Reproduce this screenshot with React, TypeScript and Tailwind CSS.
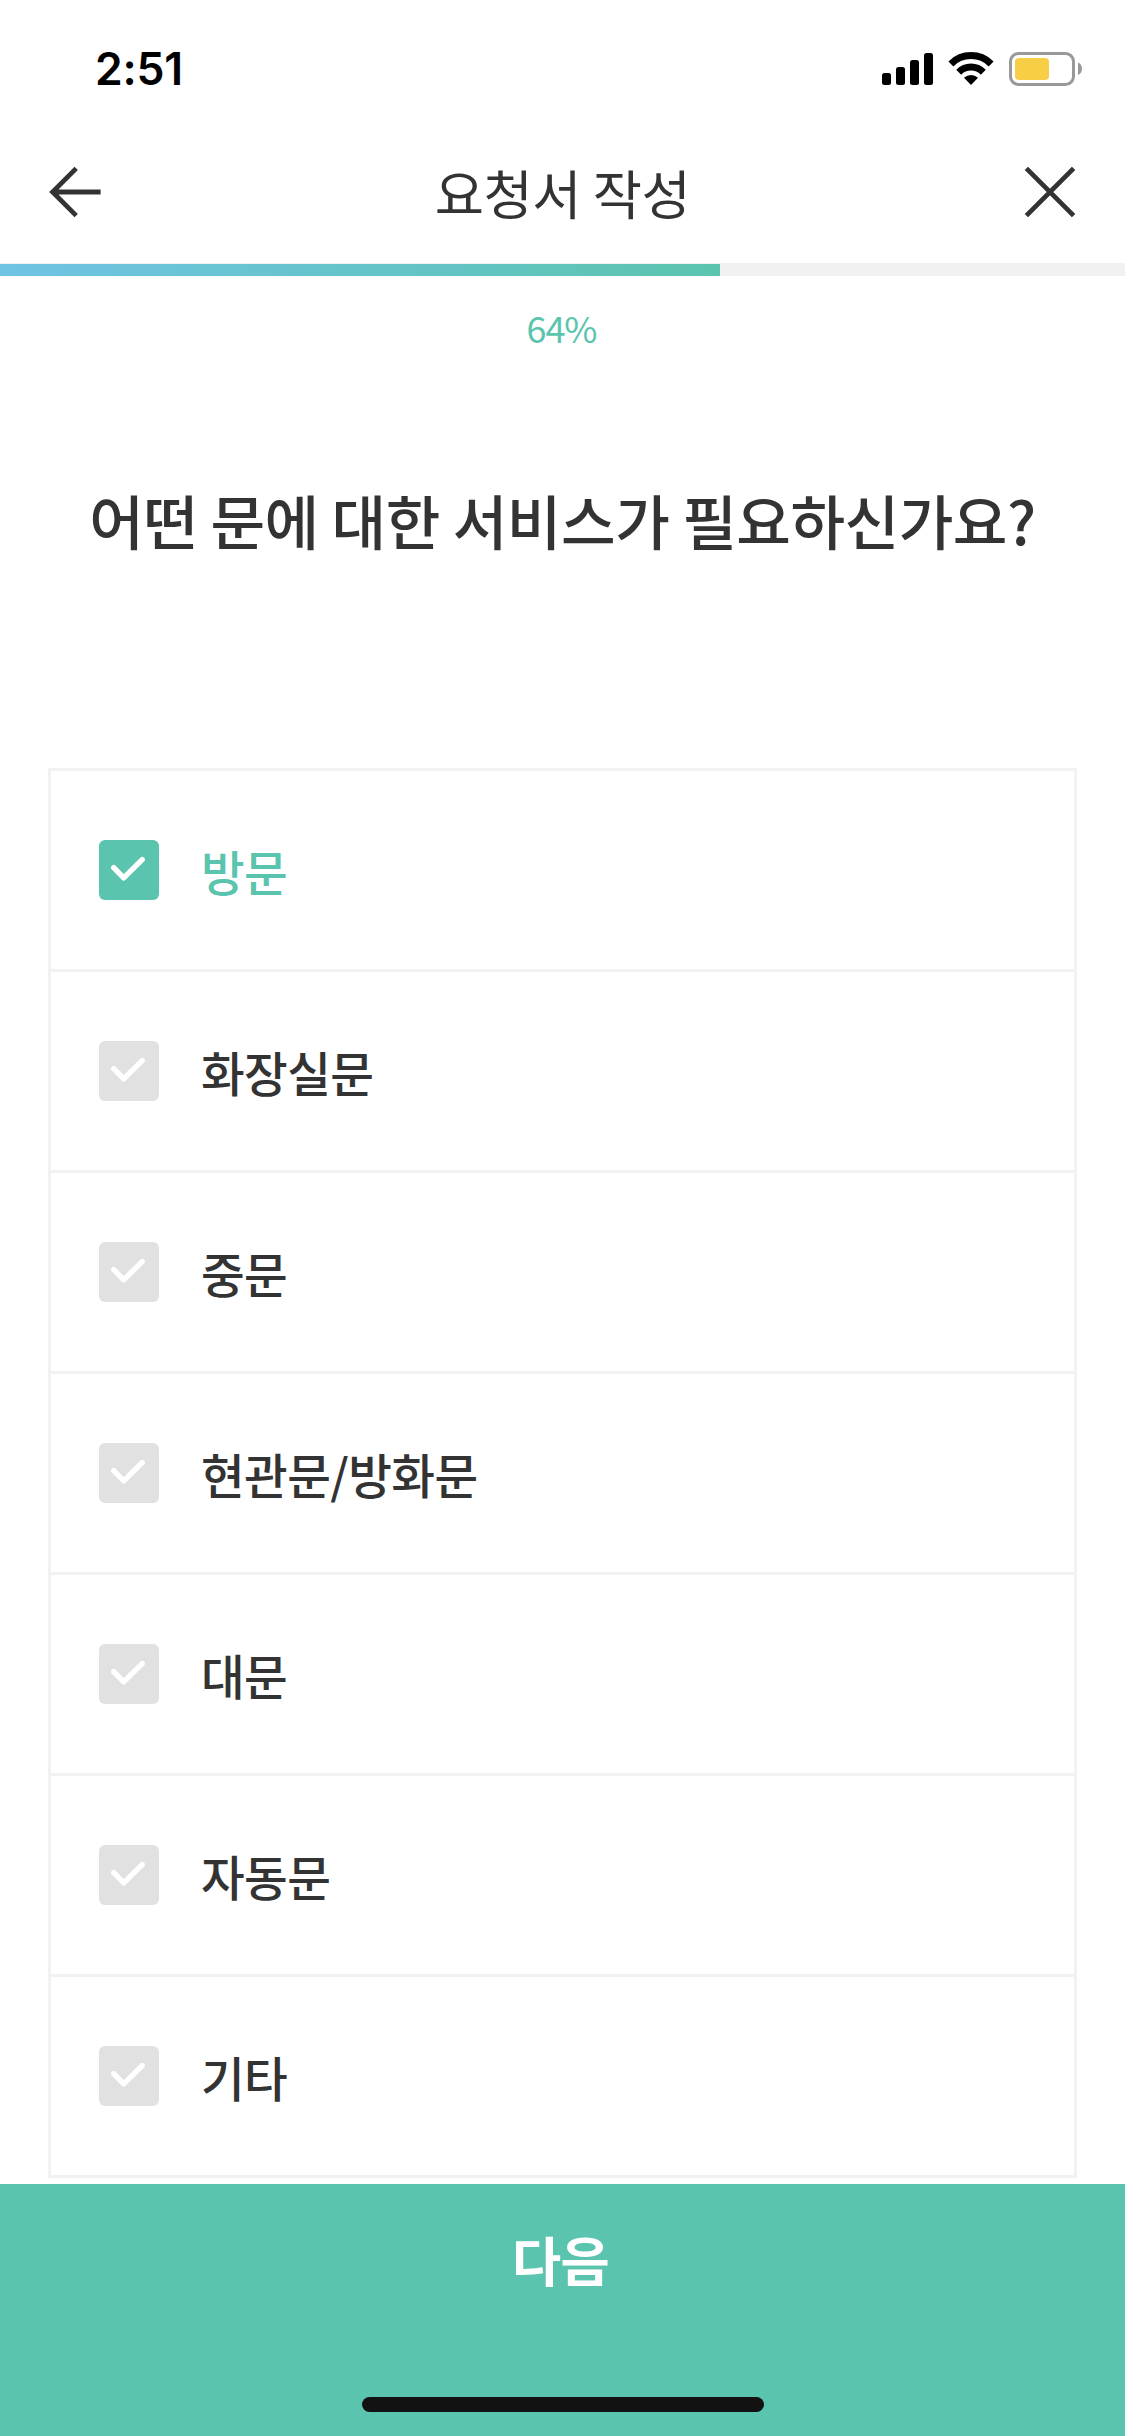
import { useState } from 'react'
import clsx from 'clsx'

const PROGRESS = 64

const OPTIONS = ['방문', '화장실문', '중문', '현관문/방화문', '대문', '자동문', '기타']

function StatusBar() {
  return (
    <div className="flex h-[132px] items-start justify-between pl-[95px] pr-[43px] pt-[52px]">
      <span className="font-['Inter',sans-serif] text-[44.5px] font-semibold leading-[34px] tracking-[-0.2px] text-black">
        2:51
      </span>
      <div className="flex h-[34px] items-start">
        <svg width="51" height="34" viewBox="0 0 51 34" fill="#000">
          <rect x="0" y="21" width="9" height="12" rx="2.5" />
          <rect x="14" y="15" width="9" height="18" rx="2.5" />
          <rect x="28" y="8" width="9" height="25" rx="2.5" />
          <rect x="42" y="1" width="9" height="32" rx="2.5" />
        </svg>
        <svg className="ml-[15px]" width="46" height="34" viewBox="0 0 46 34" fill="none" stroke="#000" strokeWidth="7">
          <path d="M2.9 11.9a28.5 28.5 0 0 1 40.2 0" />
          <path d="M10.7 20.2a17.4 17.4 0 0 1 24.6 0" />
          <path d="M23 33l-7-7.2a10 10 0 0 1 14 0z" fill="#000" stroke="none" />
        </svg>
        <svg className="ml-[15px]" width="73" height="34" viewBox="0 0 73 34">
          <rect x="1.5" y="1.5" width="63" height="31" rx="8" fill="none" stroke="#999" strokeWidth="3" />
          <rect x="6" y="6" width="34" height="22" rx="4" fill="#f7ce46" />
          <path d="M69 10.5c5.3 2.2 5.3 10.3 0 12.5z" fill="#999" />
        </svg>
      </div>
    </div>
  )
}

function Header() {
  return (
    <header className="flex h-[131px] items-start justify-between px-[48px] pt-[33px]">
      <button type="button" aria-label="뒤로">
        <svg width="54" height="54" viewBox="0 0 54 54" fill="none" stroke="#333" strokeWidth="4.8">
          <path d="M28.2 3.4L4.6 27l23.6 23.6M4.6 27h48" />
        </svg>
      </button>
      <h1 className="text-[53.5px] leading-[54px] tracking-[-0.4px]">요청서 작성</h1>
      <button type="button" aria-label="닫기">
        <svg width="54" height="54" viewBox="0 0 54 54" fill="none" stroke="#333" strokeWidth="4.8">
          <path d="M3.4 3.4l47.2 47.2M50.6 3.4L3.4 50.6" />
        </svg>
      </button>
    </header>
  )
}

interface OptionRowProps {
  label: string
  checked: boolean
  onToggle: () => void
}

function OptionRow({ label, checked, onToggle }: OptionRowProps) {
  return (
    <button
      type="button"
      role="checkbox"
      aria-checked={checked}
      onClick={onToggle}
      className="flex h-[198px] w-full items-center px-[48px] text-left"
    >
      <span className={clsx('h-[60px] w-[60px] rounded-[6px]', checked ? 'bg-[#5bc4ae]' : 'bg-[#e1e1e1]')}>
        <svg
          width="60"
          height="60"
          viewBox="0 0 60 60"
          fill="none"
          stroke="#fff"
          strokeWidth="5.4"
          strokeLinecap="round"
          strokeLinejoin="round"
        >
          <path d="M14.7 27.6l10 10.2 18.5-18.2" />
        </svg>
      </span>
      <span
        className={clsx(
          'ml-[42px] pt-[2px] text-[47.5px] font-medium leading-[60px] tracking-[-0.6px]',
          checked ? 'text-[#5bc4ae]' : 'text-[#333]',
        )}
      >
        {label}
      </span>
    </button>
  )
}

export default function App() {
  const [selected, setSelected] = useState<string[]>(['방문'])

  function toggle(label: string): void {
    setSelected((prev) => (prev.includes(label) ? prev.filter((v) => v !== label) : [...prev, label]))
  }

  return (
    <div className="flex h-[2436px] w-[1125px] flex-col overflow-hidden bg-white font-['Noto_Sans_CJK_KR',sans-serif] text-[#333]">
      <StatusBar />
      <Header />

      <div className="flex h-[13px] items-end bg-[#f1f1f1]">
        <div className="h-[12px] bg-linear-to-r from-[#6fc3e4] to-[#5bc4ae]" style={{ width: `${PROGRESS}%` }} />
      </div>

      <p className="pr-[2px] pt-[29px] text-center text-[36px] leading-[44px] tracking-[-1.1px] text-[#5bc4ae]">
        {PROGRESS}%
      </p>

      <h2 className="pt-[134px] text-center text-[59.4px] font-medium leading-[72px] tracking-[-0.5px]">
        어떤 문에 대한 서비스가 필요하신가요?
      </h2>

      <ul className="mx-[48px] mt-[213px] divide-y-[3px] divide-[#f2f2f2] border-[3px] border-[#f2f2f2]">
        {OPTIONS.map((label) => (
          <li key={label}>
            <OptionRow label={label} checked={selected.includes(label)} onToggle={() => toggle(label)} />
          </li>
        ))}
      </ul>

      <footer className="mt-auto flex h-[252px] flex-col items-center justify-between bg-[#5bc4ae] pb-[24px] pt-[39px]">
        <button type="button" className="pr-[4px] text-[53.5px] font-bold leading-[72px] tracking-[-0.8px] text-white">
          다음
        </button>
        <div className="h-[15px] w-[402px] rounded-full bg-[#121212]" />
      </footer>
    </div>
  )
}
